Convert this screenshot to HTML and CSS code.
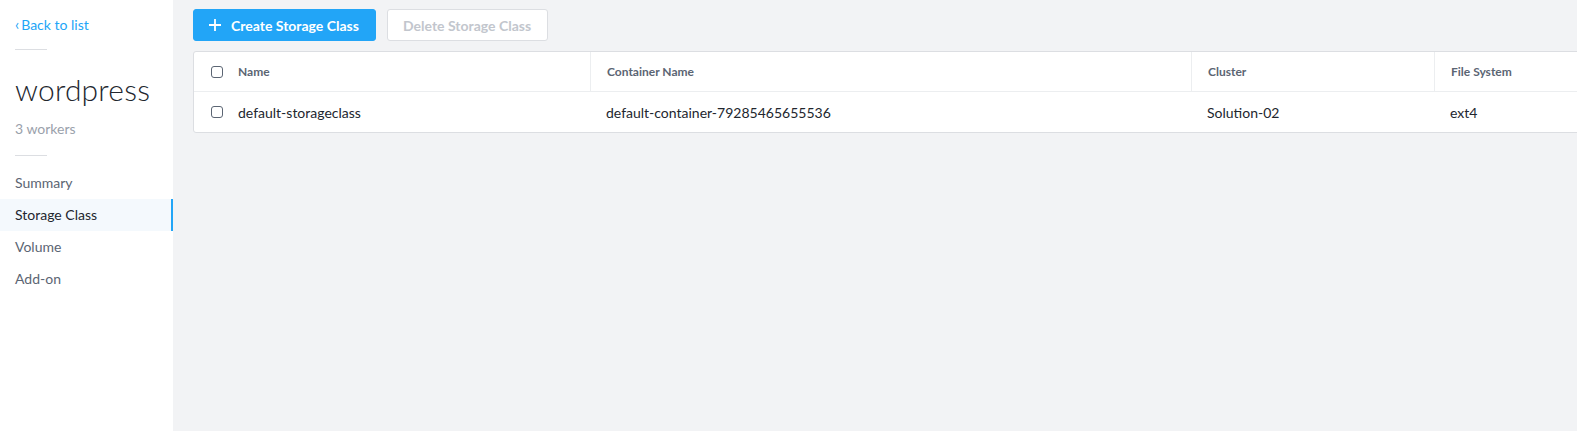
FILE: index.html
```html
<!DOCTYPE html>
<html>
<head>
<meta charset="utf-8">
<link rel="stylesheet" href="styles.css">
</head>
<body>
<div class="app">
  <aside class="sidebar">
    <a class="back"><span class="chev">‹</span>Back to list</a>
    <div class="rule"></div>
    <h1 class="title">wordpress</h1>
    <div class="sub">3 workers</div>
    <div class="rule rule2"></div>
    <nav class="nav">
      <div class="nav-item">Summary</div>
      <div class="nav-item active">Storage Class</div>
      <div class="nav-item">Volume</div>
      <div class="nav-item">Add-on</div>
    </nav>
  </aside>
  <main class="main">
    <div class="toolbar">
      <button class="btn btn-primary"><svg class="plus" width="12" height="12" viewBox="0 0 12 12"><path d="M6 0v12M0 6h12" stroke="#fff" stroke-width="1.8"/></svg>Create Storage Class</button>
      <button class="btn btn-disabled">Delete Storage Class</button>
    </div>
    <div class="table">
      <div class="row head">
        <div class="cell cb"><span class="box"></span></div>
        <div class="cell c-name">Name</div>
        <div class="cell c-cont sep">Container Name</div>
        <div class="cell c-clu sep">Cluster</div>
        <div class="cell c-fs sep">File System</div>
      </div>
      <div class="row">
        <div class="cell cb"><span class="box"></span></div>
        <div class="cell c-name">default-storageclass</div>
        <div class="cell c-cont">default-container-79285465655536</div>
        <div class="cell c-clu">Solution-02</div>
        <div class="cell c-fs">ext4</div>
      </div>
    </div>
  </main>
</div>
</body>
</html>
```
FILE: styles.css
```css
* { box-sizing: border-box; }
html, body { margin: 0; padding: 0; }
body {
  font-family: "Lato", "Open Sans", sans-serif;
  background: #f2f3f5;
  color: #22262e;
  width: 1577px;
  height: 431px;
  overflow: hidden;
}
.app { display: flex; height: 431px; }
.sidebar {
  width: 173px;
  flex: none;
  background: #fff;
  padding-top: 15px;
}
.back {
  display: block;
  margin-left: 15px;
  color: #22a5f7;
  font-size: 14px;
  line-height: 18px;
}
.chev { font-size: 15px; margin-right: 2px; }
.rule {
  width: 32px;
  height: 1px;
  background: #dcdee2;
  margin: 15px 0 0 15px;
}
.title {
  margin: 21px 0 0 15px;
  font-weight: 300;
  font-size: 30px;
  line-height: 36px;
  color: #22262e;
  letter-spacing: 0.2px;
}
.sub {
  margin: 13px 0 0 15px;
  font-size: 14px;
  line-height: 18px;
  color: #9aa1ab;
}
.rule2 { margin-top: 17px; }
.nav { margin-top: 11px; }
.nav-item {
  height: 32px;
  line-height: 32px;
  padding-left: 15px;
  font-size: 14px;
  color: #5b6573;
}
.nav-item.active {
  background: #f4f9fd;
  color: #22262e;
  border-right: 2px solid #22a5f7;
}
.main {
  flex: 1;
  padding: 9px 0 0 20px;
  overflow: hidden;
}
.toolbar { display: flex; gap: 11px; }
.btn {
  height: 32px;
  border-radius: 3px;
  font-family: inherit;
  font-size: 14px;
  font-weight: 700;
  padding: 0 15px;
  display: flex;
  align-items: center;
}
.btn-primary {
  width: 183px;
  background: #22a5f7;
  border: 1px solid #22a5f7;
  color: #fff;
}
.plus { margin: 0 10px 0 0; }
.btn-disabled {
  width: 161px;
  background: #fff;
  border: 1px solid #dcdee2;
  color: #c2c6cd;
}
.table {
  margin-top: 10px;
  width: 1560px;
  background: #fff;
  border: 1px solid #dcdee2;
  border-radius: 3px;
}
.row { display: flex; height: 40px; align-items: stretch; }
.row.head { border-bottom: 1px solid #eceef0; }
.cell {
  flex: none;
  display: flex;
  align-items: center;
  font-size: 14px;
  color: #22262e;
}
.head .cell { font-size: 12px; font-weight: 700; color: #5b6573; }
.cb { width: 44px; padding-left: 17px; }
.box {
  width: 12px;
  height: 12px;
  border: 1px solid #5b6573;
  border-radius: 3px;
}
.c-name { width: 352px; }
.c-cont { width: 601px; padding-left: 16px; }
.c-clu { width: 243px; padding-left: 16px; }
.c-fs { width: 300px; padding-left: 16px; }
.sep { border-left: 1px solid #eceef0; }
```
